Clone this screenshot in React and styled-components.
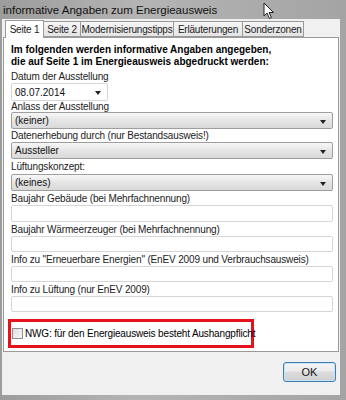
import styled, { createGlobalStyle } from "styled-components";

const GlobalStyle = createGlobalStyle`
  html, body {
    margin: 0;
    padding: 0;
    background: #a8a8a8;
  }
  * {
    box-sizing: border-box;
  }
`;

const Window = styled.div`
  position: relative;
  width: 346px;
  height: 400px;
  display: flex;
  flex-direction: column;
  padding: 0 6px 5px 2px;
  background: linear-gradient(90deg, #9c9c9c 0%, #b4b4b4 40%, #a4a4a4 100%);
  font-family: "Liberation Sans", Arial, sans-serif;
  font-size: 10px;
  color: #000;
  overflow: hidden;
`;

const TitleBar = styled.div`
  height: 19px;
  flex-shrink: 0;
  display: flex;
  align-items: center;
  padding-left: 1px;
  font-size: 11.5px;
  color: #111;
`;

const Cursor = styled.svg`
  position: absolute;
  left: 263px;
  top: 2px;
  width: 12px;
  height: 18px;
`;

const Client = styled.div`
  flex: 1;
  display: flex;
  flex-direction: column;
  background: #f0f0f0;
  padding: 1px 1px 0 1px;
`;

const TabStrip = styled.div`
  display: flex;
  align-items: flex-end;
  height: 17px;
  flex-shrink: 0;
  padding-left: 2px;
  position: relative;
  z-index: 1;
`;

const Tab = styled.div`
  flex-shrink: 0;
  width: ${(p) => p.$w}px;
  height: ${(p) => (p.$active ? "18px" : "16px")};
  margin-bottom: ${(p) => (p.$active ? "-1px" : "0")};
  margin-left: ${(p) => (p.$active ? "0" : "-1px")};
  display: flex;
  align-items: center;
  justify-content: center;
  border: 1px solid #9a9a9a;
  border-bottom: ${(p) => (p.$active ? "none" : "1px solid #9a9a9a")};
  background: ${(p) =>
    p.$active ? "#fff" : "linear-gradient(#f6f6f6, #e4e4e4)"};
  font-size: 10px;
  letter-spacing: -0.2px;
  color: #222;
  white-space: nowrap;
  &:first-child {
    margin-left: 0;
  }
`;

const Panel = styled.div`
  height: 315px;
  flex-shrink: 0;
  background: #fff;
  border: 1px solid #9a9a9a;
  padding: 6px 5px 0 7px;
  display: flex;
  flex-direction: column;
`;

const Heading = styled.div`
  font-weight: bold;
  font-size: 10px;
  line-height: 12px;
  margin-bottom: 2px;
  white-space: nowrap;
`;

const Label = styled.div`
  height: ${(p) => p.$h}px;
  display: flex;
  align-items: center;
  color: #222;
  letter-spacing: -0.15px;
  white-space: nowrap;
`;

const Field = styled.div`
  height: ${(p) => p.$height}px;
  width: ${(p) => (p.$narrow ? "97px" : "322px")};
  display: flex;
  align-items: center;
  justify-content: space-between;
  padding: 0 6px 0 3px;
  border-radius: 2px;
  border: 1px solid ${(p) => (p.$kind === "select" ? "#9e9e9e" : "#d6d6d6")};
  background: ${(p) =>
    p.$kind === "select" ? "linear-gradient(#f7f7f7, #e3e3e3 55%, #d9d9d9)" : "#fff"};
  color: #111;
`;

const Arrow = styled.span`
  width: 0;
  height: 0;
  border-left: 3.5px solid transparent;
  border-right: 3.5px solid transparent;
  border-top: 4px solid #222;
  margin-top: 2px;
`;

const Spacer = styled.div`
  height: ${(p) => p.$h}px;
  flex-shrink: 0;
`;

const Highlight = styled.div`
  margin-left: -3px;
  width: 246px;
  height: 29px;
  border: 3px solid #e3121b;
  display: flex;
  align-items: center;
  gap: 2px;
  padding-left: 1px;
  white-space: nowrap;
  letter-spacing: -0.15px;
`;

const CheckBox = styled.span`
  flex-shrink: 0;
  width: 11px;
  height: 11px;
  border: 1px solid #8f8f8f;
  background: linear-gradient(135deg, #dedede, #f8f8f8);
`;

const Footer = styled.div`
  flex: 1;
  display: flex;
  justify-content: flex-end;
  align-items: flex-start;
  padding: 10px 3px 0 0;
`;

const Button = styled.button`
  width: 53px;
  height: 20px;
  border: 1px solid #3c7fb1;
  border-radius: 3px;
  background: linear-gradient(#f4f4f4 0%, #ececec 45%, #dcdcdc 50%, #cfcfcf 100%);
  box-shadow: inset 0 0 0 1px #c6e4f7;
  font-family: "Liberation Sans", Arial, sans-serif;
  font-size: 11px;
  color: #111;
  padding: 0;
`;

const tabs = [
  { t: "Seite 1", w: 39 },
  { t: "Seite 2", w: 38 },
  { t: "Modernisierungstipps", w: 94 },
  { t: "Erläuterungen", w: 70 },
  { t: "Sonderzonen", w: 62 },
];

const fields = [
  { label: "Anlass der Ausstellung", kind: "select", value: "(keiner)", h: 11, fh: 17 },
  { label: "Datenerhebung durch (nur Bestandsausweis!)", kind: "select", value: "Aussteller", h: 13, fh: 17 },
  { label: "Lüftungskonzept:", kind: "select", value: "(keines)", h: 15, fh: 17 },
  { label: "Baujahr Gebäude (bei Mehrfachnennung)", kind: "input", h: 14, fh: 17 },
  { label: "Baujahr Wärmeerzeuger (bei Mehrfachnennung)", kind: "input", h: 14, fh: 16 },
  { label: 'Info zu "Erneuerbare Energien" (EnEV 2009 und Verbrauchsausweis)', kind: "input", h: 14, fh: 16 },
  { label: "Info zu Lüftung (nur EnEV 2009)", kind: "input", h: 14, fh: 16 },
];

const App = () => {
  return (
    <>
      <GlobalStyle />
      <Window>
        <TitleBar>informative Angaben zum Energieausweis</TitleBar>
        <Cursor viewBox="0 0 12 18">
          <path
            d="M1 1 L1 14 L4 11 L6.5 16.5 L8.5 15.5 L6 10.5 L10.5 10.5 Z"
            fill="#fff"
            stroke="#222"
            strokeWidth="1"
            strokeLinejoin="round"
          />
        </Cursor>
        <Client>
          <TabStrip>
            {tabs.map((tab, i) => (
              <Tab key={tab.t} $active={i === 0} $w={tab.w}>
                {tab.t}
              </Tab>
            ))}
          </TabStrip>
          <Panel>
            <Heading>
              Im folgenden werden informative Angaben angegeben,
              <br />
              die auf Seite 1 im Energieausweis abgedruckt werden:
            </Heading>
            <Label $h={13}>Datum der Ausstellung</Label>
            <Field $narrow $kind="input" $height={18}>
              08.07.2014
              <Arrow />
            </Field>
            {fields.map((f) => (
              <div key={f.label}>
                <Label $h={f.h}>{f.label}</Label>
                <Field $kind={f.kind} $height={f.fh}>
                  {f.value || ""}
                  {f.kind === "select" && <Arrow />}
                </Field>
              </div>
            ))}
            <Spacer $h={7} />
            <Highlight>
              <CheckBox />
              NWG: für den Energieausweis besteht Aushangpflicht
            </Highlight>
          </Panel>
          <Footer>
            <Button>OK</Button>
          </Footer>
        </Client>
      </Window>
    </>
  );
};

export default App;
